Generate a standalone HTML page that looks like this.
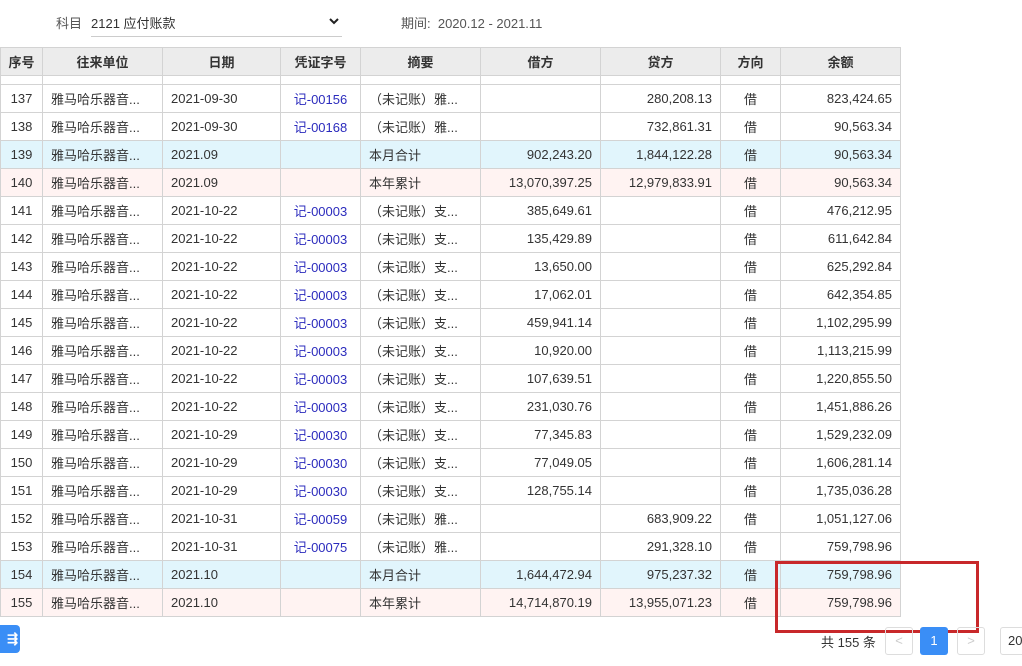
<!DOCTYPE html><html><head><meta charset="utf-8"><style>
body{margin:0;width:1022px;height:666px;overflow:hidden;background:#fff;font-family:"Liberation Sans","Noto Sans CJK SC",sans-serif;font-size:13px;color:#333;position:relative}
.a{position:absolute}
table{position:absolute;left:0;top:47px;border-collapse:collapse;table-layout:fixed;width:901px}
td,th{border:1px solid #d3d3d3;height:27px;padding:0 8px;white-space:nowrap;overflow:hidden}
th{background:#ececec;font-weight:bold;font-size:13px;height:27px}
td.r{text-align:right}td.c{text-align:center}
tr.b td{background:#e1f5fc}tr.p td{background:#fff3f2}
tr.s td{height:8px;padding:0;font-size:0;line-height:0}
.v{color:#2b2bbd}
</style></head><body>
<div class="a" style="left:56px;top:13px;color:#555">科目</div>
<div class="a" style="left:91px;top:13px;">2121 应付账款</div>
<div class="a" style="left:91px;top:36px;width:251px;border-top:1px solid #ccc"></div>
<svg class="a" style="left:328px;top:17px" width="12" height="10"><path d="M2 2l4 4 4-4" stroke="#222" stroke-width="2" fill="none"/></svg>
<div class="a" style="left:401px;top:13px;color:#555">期间:&nbsp; 2020.12 - 2021.11</div>
<table>
<colgroup><col style="width:42px"><col style="width:120px"><col style="width:118px"><col style="width:80px"><col style="width:120px"><col style="width:120px"><col style="width:120px"><col style="width:60px"><col style="width:120px"></colgroup>
<tr><th style="padding:0">序号</th><th>往来单位</th><th>日期</th><th>凭证字号</th><th>摘要</th><th>借方</th><th>贷方</th><th>方向</th><th>余额</th></tr>
<tr class="s"><td></td><td></td><td></td><td></td><td></td><td></td><td></td><td></td><td></td></tr>
<tr><td class="c">137</td><td>雅马哈乐器音...</td><td>2021-09-30</td><td class="c v">记-00156</td><td>（未记账）雅...</td><td></td><td class="r">280,208.13</td><td class="c">借</td><td class="r">823,424.65</td></tr>
<tr><td class="c">138</td><td>雅马哈乐器音...</td><td>2021-09-30</td><td class="c v">记-00168</td><td>（未记账）雅...</td><td></td><td class="r">732,861.31</td><td class="c">借</td><td class="r">90,563.34</td></tr>
<tr class="b"><td class="c">139</td><td>雅马哈乐器音...</td><td>2021.09</td><td></td><td>本月合计</td><td class="r">902,243.20</td><td class="r">1,844,122.28</td><td class="c">借</td><td class="r">90,563.34</td></tr>
<tr class="p"><td class="c">140</td><td>雅马哈乐器音...</td><td>2021.09</td><td></td><td>本年累计</td><td class="r">13,070,397.25</td><td class="r">12,979,833.91</td><td class="c">借</td><td class="r">90,563.34</td></tr>
<tr><td class="c">141</td><td>雅马哈乐器音...</td><td>2021-10-22</td><td class="c v">记-00003</td><td>（未记账）支...</td><td class="r">385,649.61</td><td></td><td class="c">借</td><td class="r">476,212.95</td></tr>
<tr><td class="c">142</td><td>雅马哈乐器音...</td><td>2021-10-22</td><td class="c v">记-00003</td><td>（未记账）支...</td><td class="r">135,429.89</td><td></td><td class="c">借</td><td class="r">611,642.84</td></tr>
<tr><td class="c">143</td><td>雅马哈乐器音...</td><td>2021-10-22</td><td class="c v">记-00003</td><td>（未记账）支...</td><td class="r">13,650.00</td><td></td><td class="c">借</td><td class="r">625,292.84</td></tr>
<tr><td class="c">144</td><td>雅马哈乐器音...</td><td>2021-10-22</td><td class="c v">记-00003</td><td>（未记账）支...</td><td class="r">17,062.01</td><td></td><td class="c">借</td><td class="r">642,354.85</td></tr>
<tr><td class="c">145</td><td>雅马哈乐器音...</td><td>2021-10-22</td><td class="c v">记-00003</td><td>（未记账）支...</td><td class="r">459,941.14</td><td></td><td class="c">借</td><td class="r">1,102,295.99</td></tr>
<tr><td class="c">146</td><td>雅马哈乐器音...</td><td>2021-10-22</td><td class="c v">记-00003</td><td>（未记账）支...</td><td class="r">10,920.00</td><td></td><td class="c">借</td><td class="r">1,113,215.99</td></tr>
<tr><td class="c">147</td><td>雅马哈乐器音...</td><td>2021-10-22</td><td class="c v">记-00003</td><td>（未记账）支...</td><td class="r">107,639.51</td><td></td><td class="c">借</td><td class="r">1,220,855.50</td></tr>
<tr><td class="c">148</td><td>雅马哈乐器音...</td><td>2021-10-22</td><td class="c v">记-00003</td><td>（未记账）支...</td><td class="r">231,030.76</td><td></td><td class="c">借</td><td class="r">1,451,886.26</td></tr>
<tr><td class="c">149</td><td>雅马哈乐器音...</td><td>2021-10-29</td><td class="c v">记-00030</td><td>（未记账）支...</td><td class="r">77,345.83</td><td></td><td class="c">借</td><td class="r">1,529,232.09</td></tr>
<tr><td class="c">150</td><td>雅马哈乐器音...</td><td>2021-10-29</td><td class="c v">记-00030</td><td>（未记账）支...</td><td class="r">77,049.05</td><td></td><td class="c">借</td><td class="r">1,606,281.14</td></tr>
<tr><td class="c">151</td><td>雅马哈乐器音...</td><td>2021-10-29</td><td class="c v">记-00030</td><td>（未记账）支...</td><td class="r">128,755.14</td><td></td><td class="c">借</td><td class="r">1,735,036.28</td></tr>
<tr><td class="c">152</td><td>雅马哈乐器音...</td><td>2021-10-31</td><td class="c v">记-00059</td><td>（未记账）雅...</td><td></td><td class="r">683,909.22</td><td class="c">借</td><td class="r">1,051,127.06</td></tr>
<tr><td class="c">153</td><td>雅马哈乐器音...</td><td>2021-10-31</td><td class="c v">记-00075</td><td>（未记账）雅...</td><td></td><td class="r">291,328.10</td><td class="c">借</td><td class="r">759,798.96</td></tr>
<tr class="b"><td class="c">154</td><td>雅马哈乐器音...</td><td>2021.10</td><td></td><td>本月合计</td><td class="r">1,644,472.94</td><td class="r">975,237.32</td><td class="c">借</td><td class="r">759,798.96</td></tr>
<tr class="p"><td class="c">155</td><td>雅马哈乐器音...</td><td>2021.10</td><td></td><td>本年累计</td><td class="r">14,714,870.19</td><td class="r">13,955,071.23</td><td class="c">借</td><td class="r">759,798.96</td></tr>
</table>
<div class="a" style="left:775px;top:561px;width:198px;height:66px;border:3px solid #c8282a"></div>
<div class="a" style="left:-8px;top:625px;width:26px;height:28px;background:#3a8ef6;border-radius:4px;color:#fff;font-weight:bold;text-align:right;line-height:28px;padding-right:2px">⇶</div>
<div class="a" style="left:821px;top:632px">共 155 条</div>
<div class="a" style="left:885px;top:627px;width:26px;height:26px;border:1px solid #ddd;border-radius:3px;color:#ccc;text-align:center;line-height:26px">&lt;</div>
<div class="a" style="left:920px;top:627px;width:28px;height:28px;background:#3a8ef6;border-radius:3px;color:#fff;text-align:center;line-height:28px">1</div>
<div class="a" style="left:957px;top:627px;width:26px;height:26px;border:1px solid #ddd;border-radius:3px;color:#ccc;text-align:center;line-height:26px">&gt;</div>
<div class="a" style="left:1000px;top:627px;width:40px;height:26px;border:1px solid #ddd;border-radius:3px;line-height:26px;padding-left:7px">20</div>
</body></html>
